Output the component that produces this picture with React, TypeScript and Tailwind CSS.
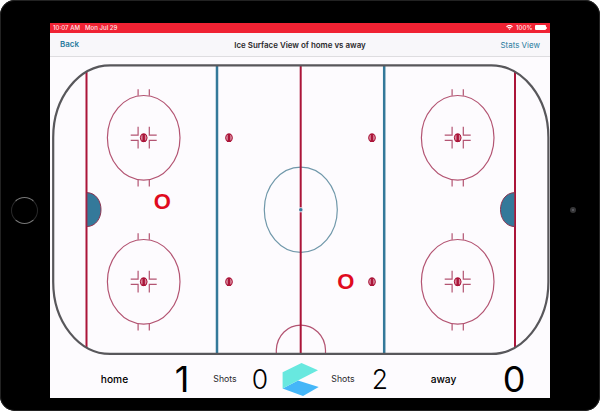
const RED = "#ab1539";
const THIN_RED = "#b35472";
const BLUE = "#34799a";

function FaceoffDot({ x, y }: { x: number; y: number }) {
  return (
    <g>
      <ellipse cx={x} cy={y} rx={3.4} ry={3.9} fill="#d78a9f" stroke={RED} strokeWidth={1} />
      <path d={`M${x - 2} ${y - 3.4}h4M${x - 2} ${y + 3.4}h4`} stroke={RED} strokeWidth={1.4} />
      <path d={`M${x} ${y - 4}v8`} stroke={RED} strokeWidth={2.4} />
    </g>
  );
}

function EndZoneCircle({ x, y }: { x: number; y: number }) {
  return (
    <g>
      <g fill="none" stroke={THIN_RED} strokeWidth={1.2}>
        <ellipse cx={x} cy={y} rx={36.3} ry={42.3} />
        <path
          d={`M${x - 5.6} ${y - 42}v-6.6M${x + 5.6} ${y - 42}v-6.6M${x - 5.6} ${y + 42}v6.6M${x + 5.6} ${y + 42}v6.6`}
        />
        <path
          d={`M${x - 13} ${y - 2.6}h7.4v-8.4M${x + 13} ${y - 2.6}h-7.4v-8.4M${x - 13} ${y + 2.6}h7.4v8.2M${x + 13} ${y + 2.6}h-7.4v8.2`}
        />
      </g>
      <FaceoffDot x={x} y={y} />
    </g>
  );
}

function Rink() {
  return (
    <svg className="block h-[300px] w-[500px] shrink-0" viewBox="50 57 500 300">
      <path d="M217 66V354" stroke={BLUE} strokeWidth={2.5} />
      <path d="M384.2 66V354" stroke={BLUE} strokeWidth={2.5} />
      <path d="M86.5 71V348" stroke={RED} strokeWidth={2} />
      <path d="M515 71V348" stroke={RED} strokeWidth={2} />
      <ellipse cx={300.8} cy={209.8} rx={36.5} ry={42.6} fill="none" stroke="#7098aa" strokeWidth={1.2} />
      <path d="M276.3 353.5V350C277 335 288 325.2 300.8 325.2S325 335 325.5 350V353.5" fill="none" stroke={THIN_RED} strokeWidth={1.2} />
      <path d="M300.7 66V354" stroke={RED} strokeWidth={2} />
      <rect x={299} y={207.3} width={3.6} height={5} fill="#e9e3ec" />
      <circle cx={300.8} cy={209.8} r={1.7} fill={BLUE} />
      <path d="M87 192.6C96 193 101 201 101 209.6S96 226.2 87 226.6Z" fill={BLUE} stroke="#8d3451" strokeWidth={1} />
      <path d="M514.5 192.6C505.5 193 500.5 201 500.5 209.6S505.5 226.2 514.5 226.6Z" fill={BLUE} stroke="#8d3451" strokeWidth={1} />
      <rect x={53.2} y={65.4} width={495.2} height={288.5} rx={57} ry={72} fill="none" stroke="#58575b" strokeWidth={2.2} />
      <EndZoneCircle x={143.7} y={137.8} />
      <EndZoneCircle x={457.7} y={137.8} />
      <EndZoneCircle x={143.7} y={281.8} />
      <EndZoneCircle x={457.7} y={281.8} />
      <FaceoffDot x={229} y={137.8} />
      <FaceoffDot x={372} y={137.8} />
      <FaceoffDot x={229} y={281.8} />
      <FaceoffDot x={372} y={281.8} />
      <g
        className="font-['Liberation_Sans',sans-serif]"
        fill="#e00a1e"
        fontSize={22}
        fontWeight={700}
        textAnchor="middle"
      >
        <text x={162.3} y={208.7}>O</text>
        <text x={345.8} y={289.4}>O</text>
      </g>
    </svg>
  );
}

function StatusBar() {
  return (
    <div className="flex h-[9.5px] shrink-0 items-center bg-[#f02233] pl-[3px] pr-[3px] text-[6.1px] leading-none font-medium whitespace-nowrap text-[#ffe4e6]">
      <span className="w-8">10:07 AM</span>
      <span>Mon Jul 29</span>
      <svg className="ml-auto h-[5px] w-[7px]" viewBox="0 0 14 10" fill="none" stroke="#fff" strokeWidth={2.4}>
        <path d="M1 3.5Q7-1.5 13 3.5M3.5 6Q7 3 10.5 6" />
        <path d="M7 10L5 7.5Q7 6 9 7.5Z" fill="#fff" stroke="none" />
      </svg>
      <span className="ml-[3px]">100%</span>
      <span className="ml-[2px] h-[5px] w-[11px] rounded-[1px] bg-white" />
      <span className="ml-[0.5px] h-[2px] w-px bg-[#ffc0c5]" />
    </div>
  );
}

function NavBar() {
  return (
    <div className="grid h-[24.5px] shrink-0 grid-cols-[100px_1fr_100px] items-center border-b border-[#dedde0] bg-[#f8f7fa] px-2.5 text-[7.95px] leading-none whitespace-nowrap text-[#287b9e]">
      <span className="pt-[2px] font-semibold">Back</span>
      <span className="pt-[3px] text-center font-semibold text-[#29282b]">Ice Surface View of home vs away</span>
      <span className="pt-[3px] text-right">Stats View</span>
    </div>
  );
}

function Scoreboard() {
  return (
    <div className="grid min-h-0 flex-1 grid-cols-[79px_56px_30px_40px_41px_44px_30px_97px_44px] items-center justify-items-center pl-[25px] leading-none whitespace-nowrap text-black">
      <span className="pt-1 text-[10.2px] font-medium">home</span>
      <span className="pt-[3px] text-[36px]">1</span>
      <span className="pt-1 text-[8.7px] text-[#29282b]">Shots</span>
      <span className="pt-[4px] text-[26.5px] font-light">0</span>
      <svg className="mt-[5px] h-[33px] w-[37px]" viewBox="282 363 37 33">
        <path d="M282.6 388.5L298 380.5L318.7 387L303 396Z" fill="#45b6f8" />
        <path d="M282.6 372.3L301.5 363L318 370.3L298 380.5L282.6 388.5Z" fill="#68e8df" />
      </svg>
      <span className="pt-1 text-[8.7px] text-[#29282b]">Shots</span>
      <span className="pt-[4px] text-[26.5px] font-light">2</span>
      <span className="pt-1 text-[10.2px] font-medium">away</span>
      <span className="pt-[3px] text-[36px]">0</span>
    </div>
  );
}

export default function App() {
  return (
    <div className="h-[411px] w-[600px] overflow-hidden bg-white font-['Inter',sans-serif]">
      <div className="flex h-[411px] w-[600px] rounded-[15px] bg-black ring-1 ring-[#222] ring-inset">
        <div className="flex w-[50px] shrink-0 items-center pt-[9px] pl-[10.5px]">
          <div className="h-[27px] w-[27px] rounded-full border border-[#29292a] border-t-[#777] border-b-[#777]" />
        </div>
        <div className="mt-[23px] flex h-[374.5px] w-[500px] shrink-0 flex-col bg-[#fdfbfe]">
          <StatusBar />
          <NavBar />
          <Rink />
          <Scoreboard />
        </div>
        <div className="flex w-[50px] shrink-0 items-center justify-center pt-[9px] pr-1">
          <div className="flex h-1.5 w-1.5 items-center justify-center rounded-full bg-[#363638]">
            <div className="h-0.5 w-0.5 rounded-full bg-[#626268]" />
          </div>
        </div>
      </div>
    </div>
  );
}
